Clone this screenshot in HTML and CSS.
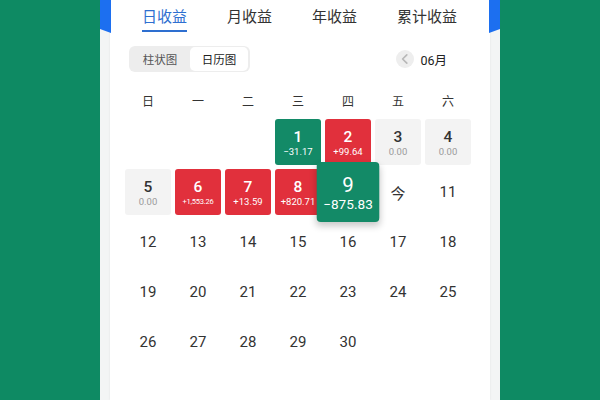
FILE: index.html
```html
<!DOCTYPE html>
<html lang="zh">
<head>
<meta charset="utf-8">
<link rel="stylesheet" href="styles.css">
</head>
<body>
<div class="phone">
  <div class="card">
    <div class="tabs">
      <div class="tab active">日收益</div>
      <div class="tab">月收益</div>
      <div class="tab">年收益</div>
      <div class="tab">累计收益</div>
    </div>
    <div class="toolbar">
      <div class="seg">
        <div class="seg-item">柱状图</div>
        <div class="seg-item on">日历图</div>
      </div>
      <div class="month">
        <span class="prev"><svg width="10" height="10" viewBox="0 0 10 10"><path d="M6.5 1.5 L3 5 L6.5 8.5" fill="none" stroke="#b8b8b8" stroke-width="1.4" stroke-linecap="round" stroke-linejoin="round"/></svg></span>
        <span class="mtext">06月</span>
      </div>
    </div>
    <div class="week">
      <span>日</span><span>一</span><span>二</span><span>三</span><span>四</span><span>五</span><span>六</span>
    </div>
    <div class="grid">
      <div class="c"></div><div class="c"></div><div class="c"></div>
      <div class="c box down"><b>1</b><i>−31.17</i></div>
      <div class="c box up"><b>2</b><i>+99.64</i></div>
      <div class="c box flat"><b>3</b><i>0.00</i></div>
      <div class="c box flat"><b>4</b><i>0.00</i></div>
      <div class="c box flat"><b>5</b><i>0.00</i></div>
      <div class="c box up"><b>6</b><i class="tiny">+1,553.26</i></div>
      <div class="c box up"><b>7</b><i>+13.59</i></div>
      <div class="c box up"><b>8</b><i>+820.71</i></div>
      <div class="c box down big"><b>9</b><i>−875.83</i></div>
      <div class="c">今</div>
      <div class="c">11</div>
      <div class="c">12</div><div class="c">13</div><div class="c">14</div><div class="c">15</div><div class="c">16</div><div class="c">17</div><div class="c">18</div>
      <div class="c">19</div><div class="c">20</div><div class="c">21</div><div class="c">22</div><div class="c">23</div><div class="c">24</div><div class="c">25</div>
      <div class="c">26</div><div class="c">27</div><div class="c">28</div><div class="c">29</div><div class="c">30</div><div class="c"></div><div class="c"></div>
    </div>
  </div>
</div>
</body>
</html>
```
FILE: styles.css
```css
html, body {
  margin: 0;
  padding: 0;
}
body {
  background: #0e8a63;
  width: 600px;
  height: 400px;
  overflow: hidden;
  font-family: Roboto, "Noto Sans CJK SC", sans-serif;
}
.phone {
  position: relative;
  width: 380px;
  height: 400px;
  margin-left: 100px;
  padding: 0 10px;
  background: #f3f5f5;
}
.phone::before,
.phone::after {
  content: "";
  position: absolute;
  top: 0;
  width: 11px;
  height: 33px;
  background: #1c6ff0;
}
.phone::before {
  left: 0;
  clip-path: polygon(0 0, 100% 0, 100% 100%, 0 88%);
}
.phone::after {
  right: 0;
  clip-path: polygon(0 0, 100% 0, 100% 88%, 0 100%);
}
.card {
  height: 400px;
  background: #fff;
  box-shadow: 0 0 2px rgba(0,0,0,0.08);
}
.tabs {
  display: flex;
  gap: 40px;
  padding-left: 32px;
  height: 32px;
  font-family: "Noto Sans CJK SC", sans-serif;
}
.tab {
  font-size: 15px;
  color: #333;
  line-height: 32px;
  height: 32px;
  box-sizing: border-box;
  width: 45px;
  white-space: nowrap;
}
.tab:last-child { width: 60px; }
.tab.active {
  color: #2e6fd0;
  border-bottom: 2.5px solid #2e6fd0;
  text-align: center;
}
.toolbar {
  display: flex;
  justify-content: space-between;
  align-items: center;
  padding: 14px 43px 0 19px;
  height: 26px;
}
.seg {
  display: flex;
  background: #ededed;
  border-radius: 6px;
  padding: 1px 2px 1px 1px;
  height: 24px;
  font-family: "Noto Sans CJK SC", sans-serif;
  font-size: 11.5px;
}
.seg-item {
  width: 60px;
  text-align: center;
  line-height: 24px;
  color: #555;
  border-radius: 5px;
}
.seg-item.on {
  background: #fff;
  color: #222;
  width: 58px;
}
.month {
  display: flex;
  align-items: center;
  gap: 6px;
}
.prev {
  width: 18px;
  height: 18px;
  border-radius: 50%;
  background: #eeeeee;
  display: flex;
  align-items: center;
  justify-content: center;
}
.prev svg { width: 12px; height: 12px; }
.mtext {
  font-size: 12.5px;
  color: #222;
  font-weight: 400;
  font-family: Roboto, "Noto Sans CJK SC", sans-serif;
}
.week {
  display: grid;
  grid-template-columns: repeat(7, 46px);
  column-gap: 4px;
  padding-left: 15px;
  margin-top: 20px;
  height: 27px;
  font-family: "Noto Sans CJK SC", sans-serif;
  font-size: 12px;
  color: #333;
  text-align: center;
}
.grid {
  display: grid;
  grid-template-columns: repeat(7, 46px);
  grid-auto-rows: 46px;
  gap: 4px;
  padding-left: 15px;
}
.c {
  display: flex;
  flex-direction: column;
  align-items: center;
  justify-content: center;
  font-size: 15px;
  color: #333;
  border-radius: 3px;
}
.box b {
  font-weight: 500;
  font-size: 15.5px;
  line-height: 16px;
  margin-top: 2px;
}
.box i {
  font-style: normal;
  font-size: 9.5px;
  line-height: 11px;
  margin-top: 1px;
}
.box i.tiny {
  font-size: 7.5px;
  letter-spacing: -0.2px;
}
.down { background: #138a67; color: #fff; }
.up { background: #e1303c; color: #fff; }
.flat { background: #f3f3f3; color: #333; }
.flat i { color: #9a9a9a; }
.big {
  transform: scale(1.36, 1.3);
  box-shadow: 0 3px 6px rgba(0,0,0,0.22);
  z-index: 2;
  position: relative;
}
.big b { font-size: 15px; font-weight: 400; }
.big i { font-size: 10px; }
```
